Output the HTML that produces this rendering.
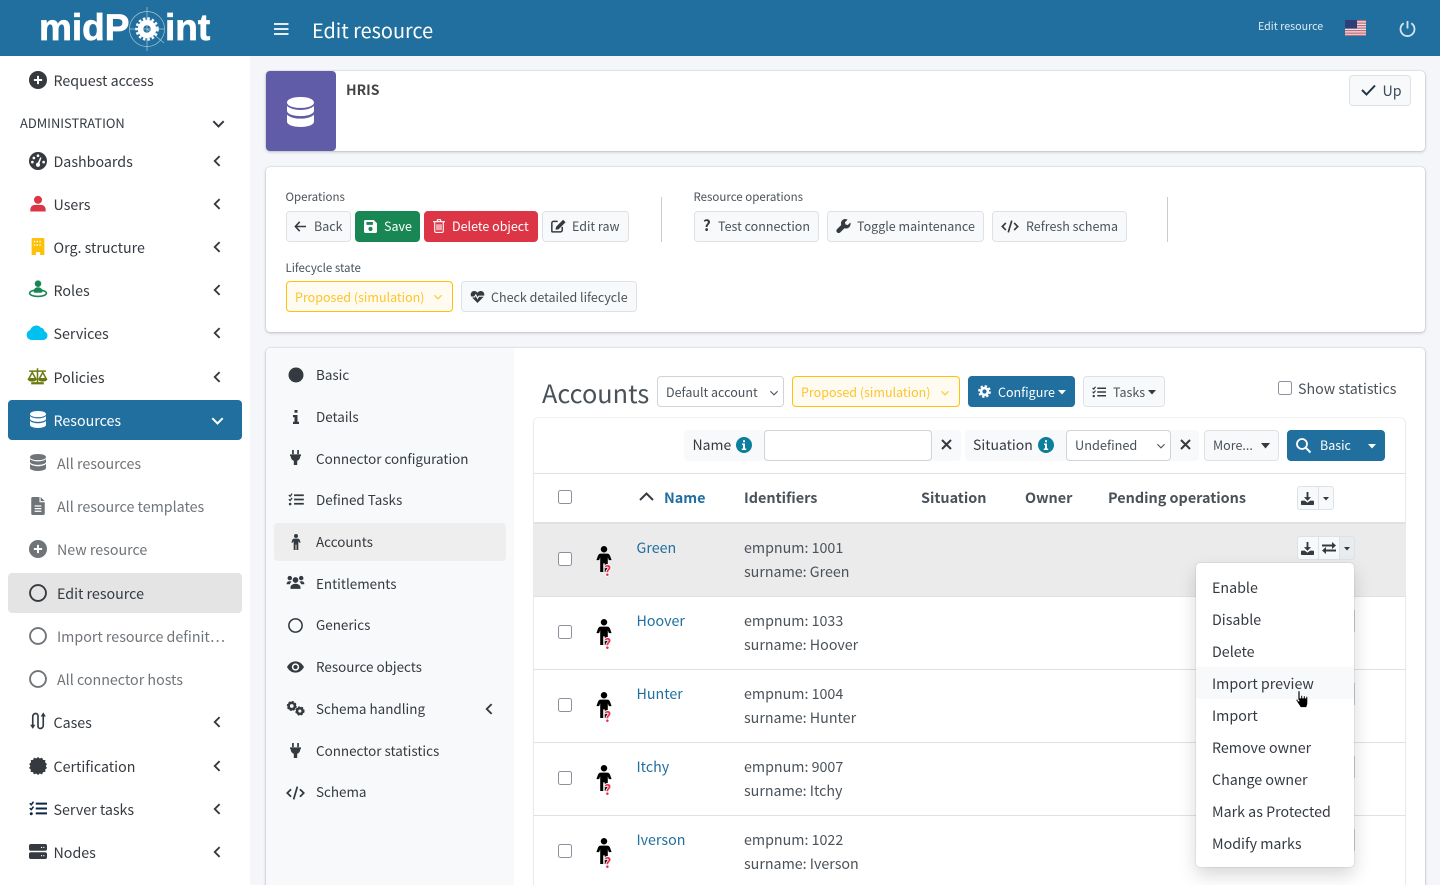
<!DOCTYPE html>
<html><head><meta charset="utf-8"><title>Edit resource</title>
<style>
html,body{margin:0;padding:0;width:1440px;height:885px;overflow:hidden;background:#f4f6f9}
body{font-family:"Noto Sans CJK JP","Liberation Sans",sans-serif;font-size:14.25px;color:#343a40;position:relative}
.t{position:absolute;line-height:20px;height:20px;white-space:nowrap}
.s{font-size:12.5px}
.v{font-size:13.45px;transform:translateY(-1px)}
.o{font-size:11.5px}
.h{font-size:14.4px;font-weight:bold}
.x{position:absolute;box-sizing:border-box}
.b{position:absolute;box-sizing:border-box;border:1px solid #dee2e6;background:#f8f9fa;border-radius:4px}
svg{position:absolute;overflow:visible}
.g{color:#6f7479}
.n{color:#343a40}
.a{color:#206f9e}
.d{color:#4a5259}
.q{font-size:14px;font-weight:bold;color:#e8304f;height:14px;line-height:14px;text-shadow:1px 0 0 #fff,-1px 0 0 #fff,0 1px 0 #fff,0 -1px 0 #fff}
.cb{position:absolute;box-sizing:border-box;width:14px;height:14px;border:1px solid #8f8f9d;border-radius:2.5px;background:#fff}
.l{position:absolute;height:1px;left:534px;width:871px;background:#dee2e6}
</style></head><body>
<svg width="0" height="0" style="position:absolute">
<defs>
<symbol id="plus" viewBox="0 0 24 24"><circle cx="12" cy="12" r="12" fill="currentColor"/><path d="M12 6.500v11M6.500 12h11" stroke="#fff" stroke-width="2.600"/></symbol>
<symbol id="db" viewBox="2 1 20 22" preserveAspectRatio="none"><path fill="currentColor" d="M12 1C6 1 2 2.800 2 5s4 4 10 4 10-1.800 10-4-4-4-10-4zM2 7.600V11c0 2.200 4 4 10 4s10-1.800 10-4V7.600C19.800 9.500 16 10.500 12 10.500S4.200 9.500 2 7.600zM2 14v5c0 2.200 4 4 10 4s10-1.800 10-4v-5c-2.200 1.900-6 2.900-10 2.900S4.200 15.900 2 14z"/></symbol>
<symbol id="dash" viewBox="0 0 24 24"><circle cx="12" cy="12" r="12" fill="currentColor"/><g fill="#fff"><circle cx="12" cy="5" r="1.800"/><circle cx="6.500" cy="8" r="1.800"/><circle cx="4.500" cy="13.500" r="1.800"/><circle cx="19.500" cy="13.500" r="1.800"/><circle cx="12" cy="17" r="2.800"/><path d="M11 16l4-9 1.700.7-3.500 9.300z"/></g></symbol>
<symbol id="user" viewBox="0 0 24 24"><circle cx="12" cy="6.500" r="6" fill="currentColor"/><path fill="currentColor" d="M7.500 14h9c4 0 7 3 7 7v3H.5v-3c0-4 3-7 7-7z"/></symbol>
<symbol id="org" viewBox="0 0 18 24"><path fill="currentColor" d="M1.500 0h15A1.500 1.500 0 0 1 18 1.500V24h-6v-4H6v4H0V1.500A1.500 1.500 0 0 1 1.500 0z"/><path stroke="#fff" stroke-width="2" stroke-dasharray="2 2" d="M3 5h12M3 10h12"/></symbol>
<symbol id="role" viewBox="0 0 26 26"><circle cx="13" cy="5" r="4.500" fill="currentColor"/><path fill="currentColor" d="M7 16c0-4 2.500-6 6-6s6 2 6 6c0 1-1 1.500-6 1.500S7 17 7 16z"/><ellipse cx="13" cy="18" rx="11.500" ry="4.500" fill="none" stroke="currentColor" stroke-width="2.200"/></symbol>
<symbol id="cloud" viewBox="0 0 30 22"><path fill="currentColor" d="M7 22a7 7 0 0 1-2-13.700A8.500 8.500 0 0 1 19.500 5 6 6 0 0 1 24.500 10 6.200 6.200 0 0 1 23.500 22z"/></symbol>
<symbol id="scale" viewBox="0 0 30 24"><g fill="none" stroke="currentColor" stroke-width="2.200"><path d="M15 1v20M3 5h24M8 22h14"/><path d="M7.500 7L2.500 16h10zM22.500 7l-5 9h10z"/></g><path fill="currentColor" d="M1 16h13c0 3-3 4-6.500 4S1 19 1 16zM16 16h13c0 3-3 4-6.500 4S16 19 16 16zM6 21h18v3H6z"/></symbol>
<symbol id="file" viewBox="0 0 18 24"><path fill="currentColor" d="M2 0h9v7h7v15a2 2 0 0 1-2 2H2a2 2 0 0 1-2-2V2a2 2 0 0 1 2-2zM12.500 0L18 5.500h-5.500z"/><path stroke="#fff" stroke-width="1.700" d="M4.500 12h9M4.500 15.500h9M4.500 19h9"/></symbol>
<symbol id="ring" viewBox="0 0 24 24"><circle cx="12" cy="12" r="10.600" fill="none" stroke="currentColor" stroke-width="2.500"/></symbol>
<symbol id="cases" viewBox="0 0 24 24"><path fill="none" stroke="currentColor" stroke-width="2.200" d="M5 21V6a4 4 0 0 1 4-4h0a3 3 0 0 1 3 3v14a3 3 0 0 0 3 3h0a4 4 0 0 0 4-4V3"/><path fill="currentColor" d="M1.500 17h7L5 22.500zM15.500 6h7L19 .5z"/></symbol>
<symbol id="cert" viewBox="0 0 24 24"><path fill="currentColor" d="M12 0l2.400 2 3-1.100 1.300 2.900 3.100.4-.2 3.200 2.400 2-1.700 2.600 1.700 2.600-2.400 2 .2 3.200-3.100.4-1.300 2.900-3-1.100-2.400 2-2.400-2-3 1.100-1.300-2.900-3.100-.4.200-3.200-2.400-2L1.900 12 .2 9.400l2.400-2-.2-3.200 3.100-.4L6.600.9l3 1.100z"/></symbol>
<symbol id="tasks" viewBox="0 0 24 20"><path fill="none" stroke="currentColor" stroke-width="2" d="M1 3l2 2 3-4M1 9.500l2 2 3-4"/><circle cx="3" cy="17" r="2" fill="currentColor"/><path stroke="currentColor" stroke-width="2.600" d="M9 3.500h15M9 10h15M9 16.500h15"/></symbol>
<symbol id="nodes" viewBox="0 0 24 20"><rect y="0" width="24" height="9" rx="2.500" fill="currentColor"/><rect y="11" width="24" height="9" rx="2.500" fill="currentColor"/><path stroke="#fff" stroke-width="1.500" d="M16 4.500h1.500M19 4.500h1.500M16 15.500h1.500M19 15.500h1.500"/></symbol>
<symbol id="plug" viewBox="0 0 16 22"><path fill="currentColor" d="M3 0h2.500v6H3zM10.500 0H13v6h-2.500zM0 6.500h16V9h-1c0 3.500-1.800 6-4.500 6.800V22h-5v-6.200C2.800 15 1 12.500 1 9H0z"/></symbol>
<symbol id="person" viewBox="0 0 14 24"><circle cx="7" cy="3" r="3" fill="currentColor"/><path fill="currentColor" d="M4 7h6c1.500 0 2 .8 2.500 1.800L14 13h-2.500l-1-2.500V24H7.700v-8H6.300v8H3.500V10.500l-1 2.500H0l1.500-4.200C2 7.800 2.500 7 4 7z"/></symbol>
<symbol id="people" viewBox="0 0 30 22"><circle cx="6" cy="4" r="3.500" fill="currentColor"/><circle cx="24" cy="4" r="3.500" fill="currentColor"/><circle cx="15" cy="7" r="4.500" fill="currentColor"/><path fill="currentColor" d="M1 13c0-2.500 2-4 5-4 1 0 2 .2 3 .7-1.500 1-2.300 2-2.800 4H1zM29 13c0-2.500-2-4-5-4-1 0-2 .2-3 .7 1.500 1 2.300 2 2.800 4H29zM8 21c-1 0-1-1-1-2 0-3 3-6 8-6s8 3 8 6c0 1 0 2-1 2z"/></symbol>
<symbol id="eye" viewBox="0 0 30 20"><path fill="currentColor" fill-rule="evenodd" d="M15 0C8 0 3 4.500 0 10c3 5.500 8 10 15 10s12-4.500 15-10C27 4.500 22 0 15 0zm0 3.500a6.500 6.500 0 1 1 0 13 6.500 6.500 0 0 1 0-13z"/><circle cx="15" cy="10" r="3.800" fill="currentColor"/></symbol>
<symbol id="gears" viewBox="0 0 30 24"><circle cx="9" cy="8" r="5" fill="none" stroke="currentColor" stroke-width="4"/><circle cx="9" cy="8" r="7" fill="none" stroke="currentColor" stroke-width="2" stroke-dasharray="3 2.500"/><circle cx="22" cy="16" r="4.500" fill="none" stroke="currentColor" stroke-width="4"/><circle cx="22" cy="16" r="6.500" fill="none" stroke="currentColor" stroke-width="2" stroke-dasharray="3 2.500"/></symbol>
<symbol id="code" viewBox="0 0 30 22"><path fill="none" stroke="currentColor" stroke-width="2.800" d="M8 5l-6 6 6 6M22 5l6 6-6 6M18 1l-6 20"/></symbol>
<symbol id="chevl" viewBox="0 0 10 16"><path fill="none" stroke="currentColor" stroke-width="2.500" d="M8.500 1.500L2 8l6.500 6.500"/></symbol>
<symbol id="chevd" viewBox="0 0 16 10"><path fill="none" stroke="currentColor" stroke-width="2.500" d="M1.500 1.500L8 8l6.500-6.500"/></symbol>
<symbol id="chevn" viewBox="0 0 16 10"><path fill="none" stroke="currentColor" stroke-width="1.800" d="M2 2l6 6 6-6"/></symbol>
<symbol id="back" viewBox="0 0 16 14"><path fill="none" stroke="currentColor" stroke-width="2" d="M7 1L1.500 7 7 13M2 7h13"/></symbol>
<symbol id="save" viewBox="0 0 16 16"><path fill="currentColor" fill-rule="evenodd" d="M2 0h10l4 4v10a2 2 0 0 1-2 2H2a2 2 0 0 1-2-2V2a2 2 0 0 1 2-2zM3 2.500v3.500h8V2.500zM8 8.500a2.500 2.500 0 1 0 0 5 2.500 2.500 0 0 0 0-5z"/></symbol>
<symbol id="trash" viewBox="0 0 14 16"><path fill="none" stroke="currentColor" stroke-width="1.300" d="M2 3.500V14a1.500 1.500 0 0 0 1.500 1.500h7A1.500 1.500 0 0 0 12 14V3.500M0 3h14M4.500 3l.8-2.300h3.400L9.500 3M4.700 6v7M7 6v7M9.300 6v7"/></symbol>
<symbol id="edit" viewBox="0 0 18 16"><path fill="none" stroke="currentColor" stroke-width="1.800" d="M8 2.500H3A2 2 0 0 0 1 4.500v9.500a1 1 0 0 0 1 1h9.500a2 2 0 0 0 2-2V9"/><path fill="currentColor" d="M14.500.5l3 3L9 12l-3.500.5L6 9z"/></symbol>
<symbol id="wrench" viewBox="0 0 16 16"><path fill="currentColor" d="M15.800 4l-2.900 2.900-2.600-.6-.6-2.600L12.600.8C10.600-.4 8-.1 6.500 1.500 5 3 4.800 5 5.400 6.800L.6 11.600a2.600 2.600 0 0 0 3.700 3.700l4.800-4.800c1.800.6 3.900.4 5.400-1.100 1.600-1.500 1.900-3.900 1.300-5.400z"/></symbol>
<symbol id="heart" viewBox="0 0 16 14"><path fill="currentColor" d="M8 14L1.500 7.500C-.5 5.400-.3 2.500 1.500 1 3.300-.5 6-.3 8 2 10-.3 12.700-.5 14.500 1c1.800 1.500 2 4.400 0 6.500z"/><path fill="none" stroke="#f8f9fa" stroke-width="1.300" d="M0 7h4.500l1.500-2.500 2 4 1.500-2.500H16"/></symbol>
<symbol id="gear" viewBox="0 0 16 16"><circle cx="8" cy="8" r="4.200" fill="none" stroke="currentColor" stroke-width="3.200"/><circle cx="8" cy="8" r="6.800" fill="none" stroke="currentColor" stroke-width="2.200" stroke-dasharray="3 2.340"/></symbol>
<symbol id="dl" viewBox="0 0 14 14"><path fill="currentColor" d="M6 0h2v5.500h2.800L7 9.500l-3.800-4H6z"/><path fill="currentColor" d="M0 10.500c0-.8.500-1.200 1-1.200h3l3 2.200 3-2.200h3c.5 0 1 .4 1 1.200V13c0 .6-.4 1-1 1H1c-.6 0-1-.4-1-1z"/></symbol>
<symbol id="swap" viewBox="0 0 14 12"><path fill="currentColor" d="M0 2.500h10V0l4 3.500L10 7V4.500H0zM14 7.500H4V5L0 8.500 4 12V9.500h10z"/></symbol>
<symbol id="info" viewBox="0 0 16 16"><circle cx="8" cy="8" r="8" fill="#0c7f9d"/><path fill="#fff" d="M7 3.200h2v2H7zM6 6.500h3v5h1.200v1.500H5.800v-1.500H7V8H6z"/></symbol>
</defs></svg>

<!-- header -->
<div class="x" style="left:0;top:0;width:1440px;height:56px;background:#206f9e"></div>
<div class="t" style="left:39px;top:8px;height:40px;font:bold 37px/40px 'Liberation Sans',sans-serif;color:#fff;-webkit-text-stroke:.7px #fff">midP</div>
<div class="t" style="left:165px;top:8px;height:40px;font:bold 37px/40px 'Liberation Sans',sans-serif;color:#fff;-webkit-text-stroke:.7px #fff">int</div>
<svg style="left:125px;top:7px" width="44" height="44" viewBox="0 0 44 44"><g fill="none" stroke="#a9c6d8" stroke-width=".7"><circle cx="22" cy="22" r="17.500"/><path d="M22 0v44M5 22h34M22 22l17 14"/></g><circle cx="22" cy="22" r="6.500" fill="none" stroke="#fff" stroke-width="5.500"/><circle cx="22" cy="22" r="10.500" fill="none" stroke="#fff" stroke-width="2.500" stroke-dasharray="2.500 2"/></svg>
<svg style="left:274px;top:23px" width="15" height="12"><path stroke="#fff" stroke-width="1.800" d="M0 1h14.500M0 6h14.500M0 11h14.500"/></svg>
<div class="t" style="left:312px;top:18px;height:24px;line-height:24px;font-size:19.85px;color:#fff">Edit resource</div>
<div class="t" style="left:1258px;top:17px;font-size:10.7px;color:#e0ebf2">Edit resource</div>
<svg style="left:1345px;top:20px" width="21" height="16" viewBox="0 0 21 16"><rect width="21" height="16" fill="#efe3e6"/><path stroke="#bb6b79" stroke-width="1.250" d="M0 .6h21M0 3.100h21M0 5.600h21M0 8.100h21M0 10.600h21M0 13.100h21M0 15.400h21"/><rect width="12" height="8.500" fill="#2e3f77"/></svg>
<svg style="left:1399px;top:20px" width="17" height="17" viewBox="0 0 17 17"><path fill="none" stroke="#d6e6f0" stroke-width="1.800" d="M4.700 3.200a7 7 0 1 0 7.600 0M8.500 1v7.500"/></svg>

<!-- sidebar -->
<div class="x" style="left:0;top:56px;width:250px;height:829px;background:#fff"></div>
<div class="x" style="left:8px;top:400px;width:234px;height:40px;background:#206f9e;border-radius:4px"></div>
<div class="x" style="left:8px;top:573px;width:234px;height:40px;background:#e4e4e4;border-radius:4px"></div>

<svg class="n" style="left:29px;top:71px" width="18" height="18"><use href="#plus"/></svg><div class="t n" style="left:53.500px;top:71px">Request access</div>
<div class="t n" style="left:20px;top:113px;font-size:12.900px">ADMINISTRATION</div>
<svg class="n" style="left:212px;top:120px" width="13" height="8"><use href="#chevd"/></svg>

<svg class="n" style="left:29px;top:152px" width="18" height="18"><use href="#dash"/></svg><div class="t n" style="left:53.500px;top:152px">Dashboards</div>
<svg style="left:30px;top:195px;color:#dc3545" width="16" height="17"><use href="#user"/></svg><div class="t n" style="left:53.500px;top:195px">Users</div>
<svg style="left:31px;top:238px;color:#ffc107" width="14" height="17"><use href="#org"/></svg><div class="t n" style="left:53.500px;top:238px">Org. structure</div>
<svg style="left:28px;top:280px;color:#198754" width="20" height="19"><use href="#role"/></svg><div class="t n" style="left:53.500px;top:281px">Roles</div>
<svg style="left:26px;top:324px;color:#00c0ef" width="23" height="16"><use href="#cloud"/></svg><div class="t n" style="left:53.500px;top:324px">Services</div>
<svg style="left:27px;top:367px;color:#6b7a10" width="21" height="18"><use href="#scale"/></svg><div class="t n" style="left:53.500px;top:368px">Policies</div>
<svg style="left:30px;top:411px;color:#fff" width="16" height="17"><use href="#db"/></svg><div class="t" style="left:53.500px;top:411px;color:#fff">Resources</div>
<svg class="g" style="left:30px;top:454px" width="16" height="17"><use href="#db"/></svg><div class="t g" style="left:57px;top:454px">All resources</div>
<svg class="g" style="left:31px;top:497px" width="14" height="18"><use href="#file"/></svg><div class="t g" style="left:57px;top:497px">All resource templates</div>
<svg class="g" style="left:29px;top:540px" width="18" height="18"><use href="#plus"/></svg><div class="t g" style="left:57px;top:540px">New resource</div>
<svg class="n" style="left:29px;top:584px" width="18" height="18"><use href="#ring"/></svg><div class="t n" style="left:57px;top:584px">Edit resource</div>
<svg class="g" style="left:29px;top:627px" width="18" height="18"><use href="#ring"/></svg><div class="t g" style="left:57px;top:627px">Import resource definit…</div>
<svg class="g" style="left:29px;top:670px" width="18" height="18"><use href="#ring"/></svg><div class="t g" style="left:57px;top:670px">All connector hosts</div>
<svg class="n" style="left:29px;top:712px" width="18" height="18"><use href="#cases"/></svg><div class="t n" style="left:53.500px;top:713px">Cases</div>
<svg class="n" style="left:29px;top:757px" width="18" height="18"><use href="#cert"/></svg><div class="t n" style="left:53.500px;top:757px">Certification</div>
<svg style="left:29px;top:801px;color:#0b2545" width="18" height="15"><use href="#tasks"/></svg><div class="t n" style="left:53.500px;top:800px">Server tasks</div>
<svg class="n" style="left:29px;top:844px" width="18" height="15"><use href="#nodes"/></svg><div class="t n" style="left:53.500px;top:843px">Nodes</div>

<svg class="n" style="left:213px;top:155px" width="8" height="12"><use href="#chevl"/></svg>
<svg class="n" style="left:213px;top:198px" width="8" height="12"><use href="#chevl"/></svg>
<svg class="n" style="left:213px;top:241px" width="8" height="12"><use href="#chevl"/></svg>
<svg class="n" style="left:213px;top:284px" width="8" height="12"><use href="#chevl"/></svg>
<svg class="n" style="left:213px;top:327px" width="8" height="12"><use href="#chevl"/></svg>
<svg class="n" style="left:213px;top:371px" width="8" height="12"><use href="#chevl"/></svg>
<svg style="left:211px;top:417px;color:#fff" width="13" height="8"><use href="#chevd"/></svg>
<svg class="n" style="left:213px;top:716px" width="8" height="12"><use href="#chevl"/></svg>
<svg class="n" style="left:213px;top:760px" width="8" height="12"><use href="#chevl"/></svg>
<svg class="n" style="left:213px;top:803px" width="8" height="12"><use href="#chevl"/></svg>
<svg class="n" style="left:213px;top:846px" width="8" height="12"><use href="#chevl"/></svg>

<!-- HRIS card -->
<div class="x" style="left:266px;top:71px;width:1159px;height:80px;background:#fff;border-radius:4px;box-shadow:0 0 1px rgba(0,0,0,.3),0 1px 3px rgba(0,0,0,.2)"></div>
<div class="x" style="left:266px;top:71px;width:70px;height:80px;background:#605ca8;border-radius:4px"></div>
<svg style="left:287px;top:97px;color:#fff" width="27" height="30"><use href="#db"/></svg>
<div class="t" style="left:346px;top:80px;font-weight:bold;font-size:14px;color:#444">HRIS</div>
<div class="b" style="left:1349px;top:75px;width:62px;height:31px"></div>
<svg style="left:1361px;top:84px;color:#1f3347" width="15" height="12" viewBox="0 0 15 12"><path fill="none" stroke="currentColor" stroke-width="2" d="M1 6l4.500 4.500L14 1.500"/></svg>
<div class="t" style="left:1382.500px;top:81px;color:#3c4a5a">Up</div>

<!-- Ops card -->
<div class="x" style="left:266px;top:167px;width:1159px;height:165px;background:#fff;border-radius:4px;box-shadow:0 0 1px rgba(0,0,0,.3),0 1px 3px rgba(0,0,0,.2)"></div>
<div class="t d o" style="left:285.500px;top:187px">Operations</div>
<div class="b" style="left:286px;top:211px;width:65px;height:31px"></div>
<svg class="n" style="left:294px;top:221px" width="13" height="11"><use href="#back"/></svg><div class="t s d" style="left:314px;top:216px">Back</div>
<div class="b" style="left:355px;top:211px;width:65px;height:31px;background:#198754;border-color:#198754"></div>
<svg style="left:364px;top:220px;color:#fff" width="13" height="13"><use href="#save"/></svg><div class="t s" style="left:384px;top:216px;color:#fff">Save</div>
<div class="b" style="left:424px;top:211px;width:114px;height:31px;background:#dc3545;border-color:#dc3545"></div>
<svg style="left:433px;top:219px;color:#fff" width="12" height="14"><use href="#trash"/></svg><div class="t s" style="left:452px;top:216px;color:#fff">Delete object</div>
<div class="b" style="left:542px;top:211px;width:87px;height:31px"></div>
<svg class="n" style="left:551px;top:219px" width="15" height="14"><use href="#edit"/></svg><div class="t s d" style="left:572px;top:216px">Edit raw</div>
<div class="x" style="left:661px;top:197px;width:1px;height:45px;background:#c8cdd2"></div>
<div class="t d o" style="left:693.500px;top:187px">Resource operations</div>
<div class="b" style="left:694px;top:211px;width:125px;height:31px"></div>
<div class="t n" style="left:703px;top:216px;font-weight:bold;font-size:15px">?</div><div class="t s d" style="left:718px;top:216px">Test connection</div>
<div class="b" style="left:827px;top:211px;width:157px;height:31px"></div>
<svg class="n" style="left:836px;top:219px" width="15" height="14"><use href="#wrench"/></svg><div class="t s d" style="left:857px;top:216px">Toggle maintenance</div>
<div class="b" style="left:992px;top:211px;width:135px;height:31px"></div>
<svg class="n" style="left:1001px;top:220px" width="18" height="13"><use href="#code"/></svg><div class="t s d" style="left:1026px;top:216px">Refresh schema</div>
<div class="x" style="left:1167px;top:197px;width:1px;height:45px;background:#c8cdd2"></div>
<div class="t d o" style="left:285.500px;top:258px">Lifecycle state</div>
<div class="b" style="left:286px;top:281px;width:167px;height:31px;background:#fffbf0;border-color:#ffc107"></div>
<div class="t s" style="left:295px;top:287px;color:#fcc52d">Proposed (simulation)</div>
<svg style="left:433px;top:294px;color:#fcc52d" width="10" height="6"><use href="#chevn"/></svg>
<div class="b" style="left:461px;top:281px;width:176px;height:31px"></div>
<svg class="n" style="left:470px;top:291px" width="15" height="12"><use href="#heart"/></svg><div class="t s d" style="left:491px;top:287px">Check detailed lifecycle</div>

<!-- Main card -->
<div class="x" style="left:266px;top:348px;width:1159px;height:560px;background:#fff;border-radius:4px;box-shadow:0 0 1px rgba(0,0,0,.3),0 1px 3px rgba(0,0,0,.2)"></div>
<div class="x" style="left:266px;top:348px;width:248px;height:537px;background:#f8f9fa;border-radius:4px 0 0 0"></div>
<div class="x" style="left:274px;top:523px;width:232px;height:38px;background:#eeeeee;border-radius:4px"></div>
<svg class="n" style="left:288px;top:367px" width="16" height="16" viewBox="0 0 16 16"><circle cx="8" cy="8" r="7.500" fill="currentColor"/></svg><div class="t n v" style="left:316px;top:365px">Basic</div>
<svg class="n" style="left:293px;top:410px" width="6" height="14" viewBox="0 0 6 14"><path fill="currentColor" d="M1.500 0h3v2.800h-3zM0 5h4.500v6.800H6V14H0v-2.200h1.500V7.200H0z"/></svg><div class="t n v" style="left:316px;top:407px">Details</div>
<svg class="n" style="left:290px;top:450px" width="11" height="15"><use href="#plug"/></svg><div class="t n v" style="left:316px;top:449px">Connector configuration</div>
<svg class="n" style="left:288px;top:493px" width="16" height="13"><use href="#tasks"/></svg><div class="t n v" style="left:316px;top:490px">Defined Tasks</div>
<svg class="n" style="left:291px;top:534px" width="10" height="16"><use href="#person"/></svg><div class="t n v" style="left:316px;top:532px">Accounts</div>
<svg class="n" style="left:286px;top:575px" width="19" height="15"><use href="#people"/></svg><div class="t n v" style="left:316px;top:574px">Entitlements</div>
<svg class="n" style="left:288px;top:618px" width="15" height="15"><use href="#ring"/></svg><div class="t n v" style="left:316px;top:615px">Generics</div>
<svg class="n" style="left:287px;top:661px" width="17" height="12"><use href="#eye"/></svg><div class="t n v" style="left:316px;top:657px">Resource objects</div>
<svg class="n" style="left:286px;top:701px" width="19" height="15"><use href="#gears"/></svg><div class="t n v" style="left:316px;top:699px">Schema handling</div>
<svg class="n" style="left:485px;top:703px" width="8" height="12"><use href="#chevl"/></svg>
<svg class="n" style="left:290px;top:743px" width="11" height="15"><use href="#plug"/></svg><div class="t n v" style="left:316px;top:741px">Connector statistics</div>
<svg class="n" style="left:286px;top:786px" width="19" height="14"><use href="#code"/></svg><div class="t n v" style="left:316px;top:782px">Schema</div>

<!-- Accounts toolbar -->
<div class="t" style="left:542px;top:377px;height:32px;line-height:32px;font-size:25.300px;color:#4a5259">Accounts</div>
<div class="b" style="left:657px;top:376px;width:127px;height:31px;background:#fff;border-color:#ced4da"></div>
<div class="t s d" style="left:666px;top:382px">Default account</div>
<svg class="d" style="left:769px;top:390px" width="10" height="6"><use href="#chevn"/></svg>
<div class="b" style="left:792px;top:376px;width:168px;height:31px;background:#fffbf0;border-color:#ffc107"></div>
<div class="t s" style="left:801px;top:382px;color:#fcc52d">Proposed (simulation)</div>
<svg style="left:940px;top:390px;color:#fcc52d" width="10" height="6"><use href="#chevn"/></svg>
<div class="b" style="left:968px;top:376px;width:107px;height:31px;background:#206f9e;border-color:#206f9e"></div>
<svg style="left:978px;top:385px;color:#fff" width="13" height="13"><use href="#gear"/></svg><div class="t s" style="left:998px;top:382px;color:#fff">Configure</div>
<svg style="left:1058px;top:390px" width="8" height="5"><path fill="#fff" d="M0 0h8L4 4.500z"/></svg>
<div class="b" style="left:1083px;top:376px;width:82px;height:31px"></div>
<svg class="n" style="left:1092px;top:386px" width="14" height="12"><use href="#tasks"/></svg><div class="t s d" style="left:1113px;top:382px">Tasks</div>
<svg style="left:1148px;top:390px" width="8" height="5"><path fill="#343a40" d="M0 0h8L4 4.500z"/></svg>
<div class="cb" style="left:1278px;top:381px"></div>
<div class="t d" style="left:1298px;top:379px">Show statistics</div>

<!-- Table card -->
<div class="x" style="left:534px;top:418px;width:871px;height:490px;background:#fff;border-radius:4px;box-shadow:0 0 1px rgba(0,0,0,.3),0 1px 2px rgba(0,0,0,.12)"></div>
<div class="x" style="left:684px;top:430px;width:277px;height:31px;background:#f8f9fa;border-radius:4px"></div>
<div class="t n" style="left:692.500px;top:435px;font-size:14px">Name</div>
<svg style="left:736px;top:437px" width="16" height="16"><use href="#info"/></svg>
<div class="b" style="left:764px;top:430px;width:168px;height:31px;background:#fff;border-color:#ced4da"></div>
<svg style="left:941px;top:439px" width="11" height="11"><path stroke="#343a40" stroke-width="2" d="M1 1l9 9M10 1l-9 9"/></svg>
<div class="x" style="left:965px;top:430px;width:234px;height:31px;background:#f8f9fa;border-radius:4px"></div>
<div class="t n" style="left:973px;top:435px;font-size:14px">Situation</div>
<svg style="left:1038px;top:437px" width="16" height="16"><use href="#info"/></svg>
<div class="b" style="left:1066px;top:430px;width:105px;height:31px;background:#fff;border-color:#ced4da"></div>
<div class="t d" style="left:1075px;top:435px;font-size:12.750px">Undefined</div>
<svg class="d" style="left:1156px;top:443px" width="10" height="6"><use href="#chevn"/></svg>
<svg style="left:1180px;top:439px" width="11" height="11"><path stroke="#343a40" stroke-width="2" d="M1 1l9 9M10 1l-9 9"/></svg>
<div class="b" style="left:1204px;top:430px;width:75px;height:31px"></div>
<div class="t s d" style="left:1213px;top:435px">More...</div>
<svg style="left:1261px;top:443px" width="9" height="6"><path fill="#343a40" d="M0 0h9L4.500 5.500z"/></svg>
<div class="b" style="left:1287px;top:430px;width:98px;height:31px;background:#206f9e;border-color:#206f9e"></div>
<svg style="left:1296px;top:438px" width="15" height="15" viewBox="0 0 15 15"><circle cx="6" cy="6" r="5" fill="none" stroke="#fff" stroke-width="1.800"/><path stroke="#fff" stroke-width="2" d="M9.700 9.700l4.800 4.800"/></svg>
<div class="t s" style="left:1320px;top:435px;color:#fff">Basic</div>
<svg style="left:1368px;top:444px" width="8" height="5"><path fill="#fff" d="M0 0h8L4 4.500z"/></svg>
<div class="l" style="top:473px"></div>

<!-- table header -->
<div class="cb" style="left:558px;top:490px"></div>
<svg style="left:639px;top:492px" width="15" height="9" viewBox="0 0 15 9"><path fill="none" stroke="#343a40" stroke-width="2" d="M1 8l6.500-6.500L14 8"/></svg>
<div class="t a h" style="left:664px;top:488px">Name</div>
<div class="t d h" style="left:744px;top:488px">Identifiers</div>
<div class="t d h" style="left:921px;top:488px">Situation</div>
<div class="t d h" style="left:1025px;top:488px">Owner</div>
<div class="t d h" style="left:1108px;top:488px">Pending operations</div>
<div class="b" style="left:1297px;top:486px;width:22px;height:24px;border-radius:3px 0 0 3px"></div>
<div class="b" style="left:1318px;top:486px;width:16px;height:24px;border-radius:0 3px 3px 0"></div>
<svg class="n" style="left:1301px;top:492px" width="13" height="13"><use href="#dl"/></svg>
<svg style="left:1323px;top:497px" width="6" height="4"><path fill="#343a40" d="M0 0h6L3 3.500z"/></svg>

<!-- rows -->
<div class="x" style="left:534px;top:523px;width:871px;height:73px;background:#ebebeb"></div>
<div class="l" style="top:522px;height:2px;background:#dfe1e3"></div>
<div class="l" style="top:596px"></div><div class="l" style="top:669px"></div><div class="l" style="top:742px"></div><div class="l" style="top:815px"></div>

<div class="cb" style="left:558px;top:552px"></div>
<div class="cb" style="left:558px;top:625px"></div>
<div class="cb" style="left:558px;top:698px"></div>
<div class="cb" style="left:558px;top:771px"></div>
<div class="cb" style="left:558px;top:844px"></div>

<svg style="left:596px;top:546px;color:#000" width="16" height="26"><use href="#person"/></svg><div class="t q" style="left:604px;top:564px">?</div>
<svg style="left:596px;top:619px;color:#000" width="16" height="26"><use href="#person"/></svg><div class="t q" style="left:604px;top:637px">?</div>
<svg style="left:596px;top:692px;color:#000" width="16" height="26"><use href="#person"/></svg><div class="t q" style="left:604px;top:710px">?</div>
<svg style="left:596px;top:765px;color:#000" width="16" height="26"><use href="#person"/></svg><div class="t q" style="left:604px;top:783px">?</div>
<svg style="left:596px;top:838px;color:#000" width="16" height="26"><use href="#person"/></svg><div class="t q" style="left:604px;top:856px">?</div>

<div class="t a" style="left:636.500px;top:538px">Green</div><div class="t d" style="left:744px;top:538px">empnum: 1001</div><div class="t d" style="left:744px;top:562px">surname: Green</div>
<div class="t a" style="left:636.500px;top:611px">Hoover</div><div class="t d" style="left:744px;top:611px">empnum: 1033</div><div class="t d" style="left:744px;top:635px">surname: Hoover</div>
<div class="t a" style="left:636.500px;top:684px">Hunter</div><div class="t d" style="left:744px;top:684px">empnum: 1004</div><div class="t d" style="left:744px;top:708px">surname: Hunter</div>
<div class="t a" style="left:636.500px;top:757px">Itchy</div><div class="t d" style="left:744px;top:757px">empnum: 9007</div><div class="t d" style="left:744px;top:781px">surname: Itchy</div>
<div class="t a" style="left:636.500px;top:830px">Iverson</div><div class="t d" style="left:744px;top:830px">empnum: 1022</div><div class="t d" style="left:744px;top:854px">surname: Iverson</div>

<div class="b" style="left:1297px;top:536px;width:22px;height:24px;border-radius:3px 0 0 3px"></div>
<div class="b" style="left:1318px;top:536px;width:22px;height:24px;border-radius:0"></div>
<div class="b" style="left:1339px;top:536px;width:16px;height:24px;border-radius:0 3px 3px 0;background:#e9ecef"></div>
<svg class="n" style="left:1301px;top:542px" width="13" height="13"><use href="#dl"/></svg>
<svg class="n" style="left:1322px;top:542px" width="14" height="12"><use href="#swap"/></svg>
<svg style="left:1344px;top:547px" width="6" height="4"><path fill="#343a40" d="M0 0h6L3 3.500z"/></svg>

<div class="x" style="left:1354px;top:610px;width:1px;height:22px;background:#cfd3d7"></div>
<div class="x" style="left:1354px;top:683px;width:1px;height:22px;background:#cfd3d7"></div>
<div class="x" style="left:1354px;top:756px;width:1px;height:22px;background:#cfd3d7"></div>
<div class="x" style="left:1354px;top:829px;width:1px;height:22px;background:#cfd3d7"></div>

<!-- dropdown -->
<div class="x" style="left:1196px;top:563px;width:158px;height:304px;background:#fff;border-radius:4px;box-shadow:0 0 1px rgba(0,0,0,.35),0 8px 18px rgba(0,0,0,.16)"></div>
<div class="x" style="left:1196px;top:667px;width:158px;height:32px;background:#f8f9fa"></div>
<div class="t n" style="left:1212px;top:578px">Enable</div>
<div class="t n" style="left:1212px;top:610px">Disable</div>
<div class="t n" style="left:1212px;top:642px">Delete</div>
<div class="t n" style="left:1212px;top:674px">Import preview</div>
<div class="t n" style="left:1212px;top:706px">Import</div>
<div class="t n" style="left:1212px;top:738px">Remove owner</div>
<div class="t n" style="left:1212px;top:770px">Change owner</div>
<div class="t n" style="left:1212px;top:802px">Mark as Protected</div>
<div class="t n" style="left:1212px;top:834px">Modify marks</div>
<svg style="left:1295px;top:690px" width="16" height="19" viewBox="0 0 16 19"><path fill="#000" stroke="#fff" stroke-width=".8" d="M3 1.500c0-1 2-1 2 0V8h.8V6c0-1 1.800-1 1.800 0v2h.8V6.500c0-1 1.800-1 1.800 0V8h.7V7c0-1 1.800-1 1.800 0v6c0 2-.8 3-1.200 4.500H5.500C4.500 15.500 2.500 13 1 10.500c-.5-1 1-2 2-1l1 1.300H3z"/></svg>
</body></html>
